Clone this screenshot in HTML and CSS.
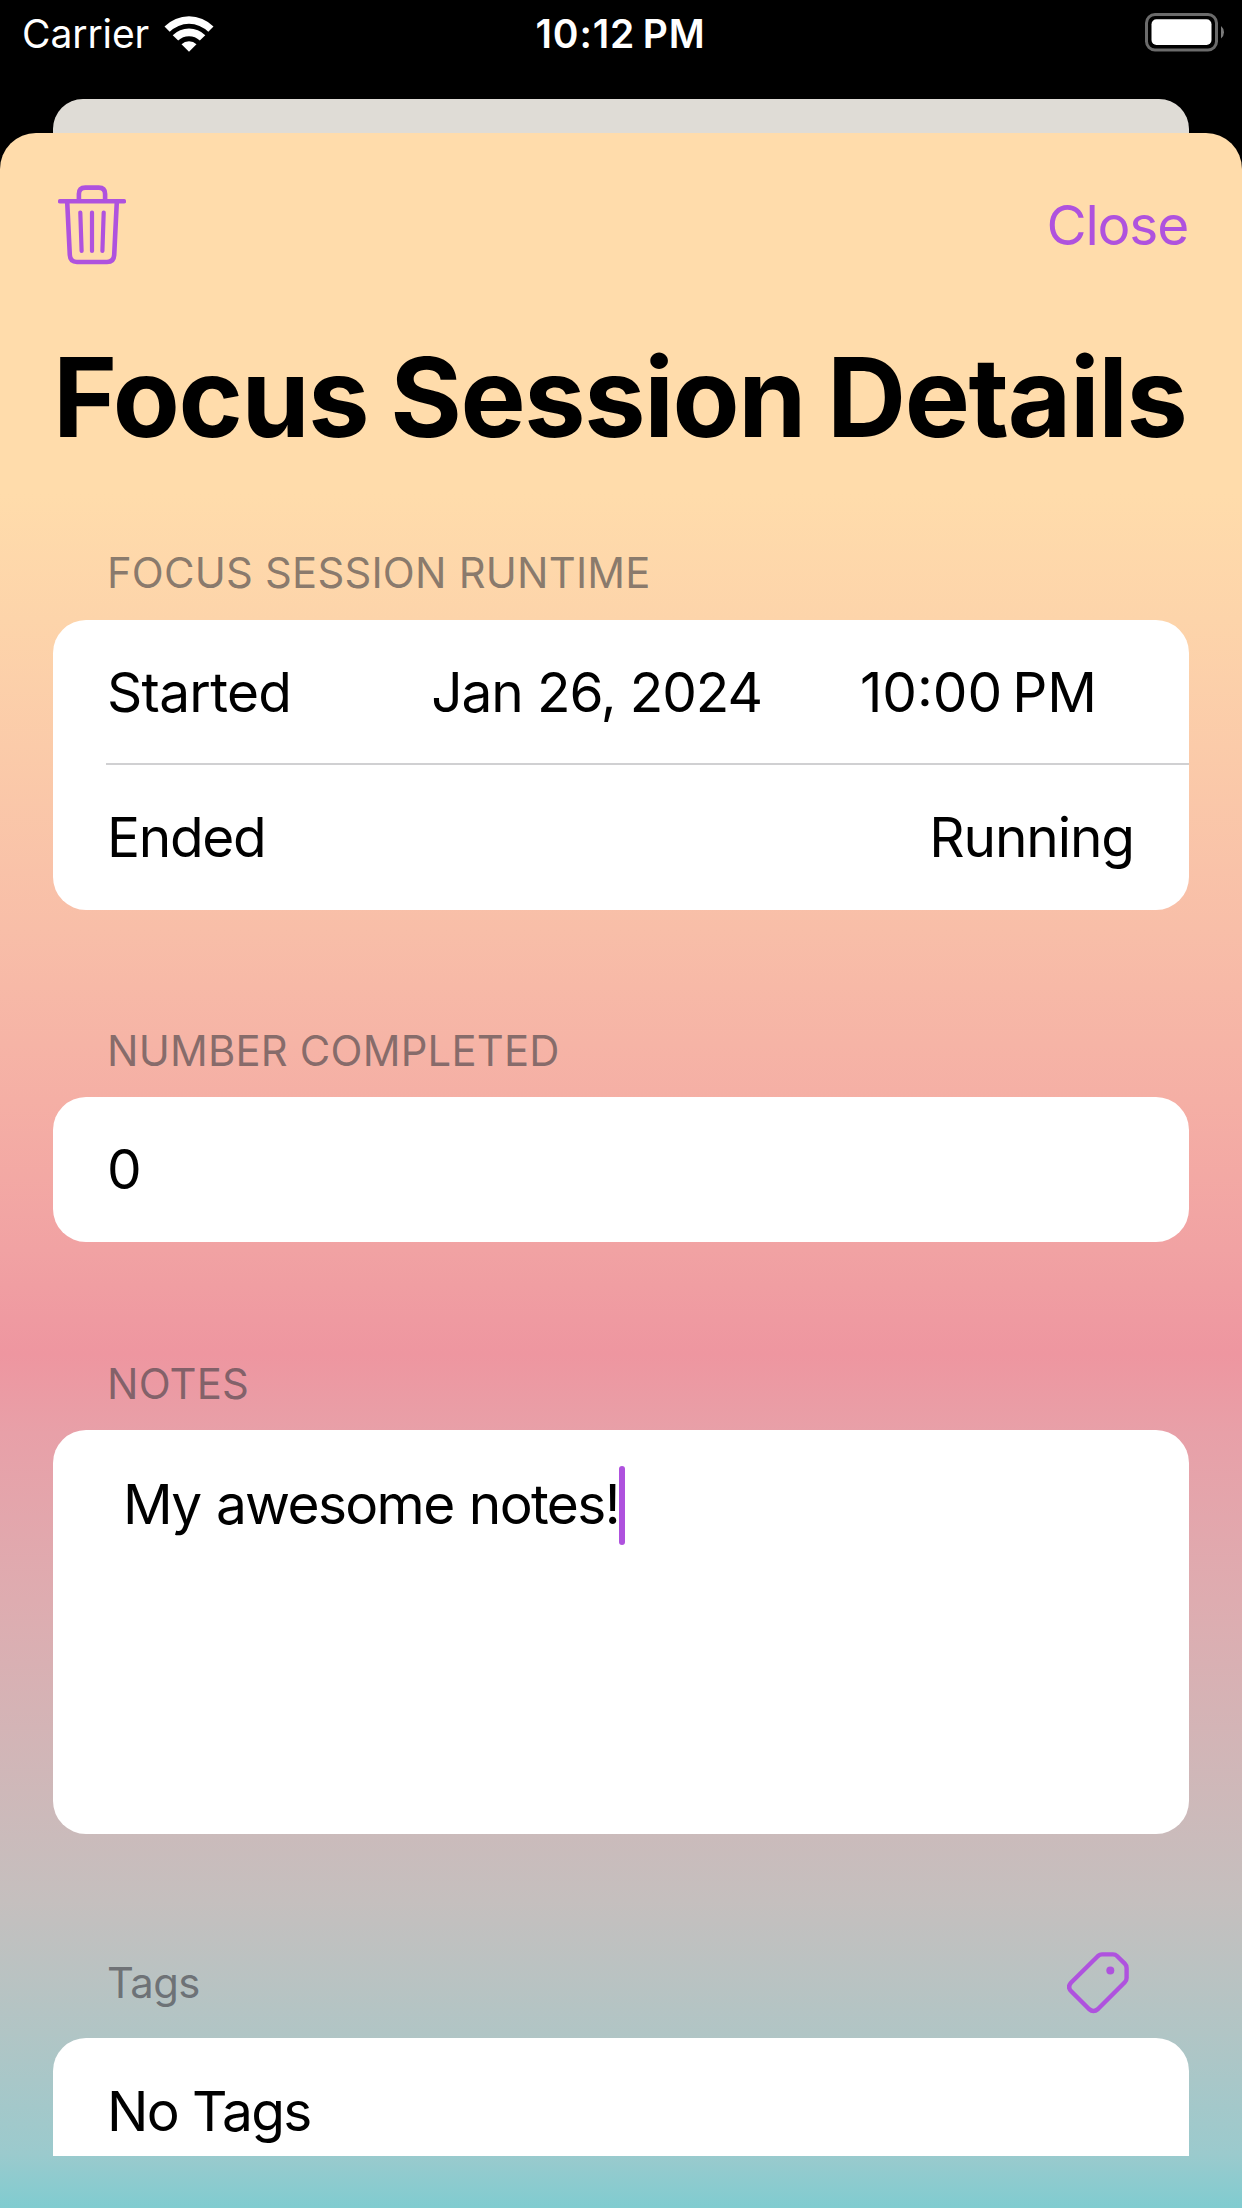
FILE: index.html
```html
<!DOCTYPE html>
<html lang="en">
<head>
    <meta charset="utf-8">
    <title>Focus Session Details</title>
    <link rel="stylesheet" href="styles.css">
</head>
<body>
    <div class="status-bar">
        <div class="carrier">
            <span class="carrier-name">Carrier</span>
            <svg class="wifi" width="50" height="38" viewBox="0 0 50 38">
                <path d="M0.5 11.5 A34.5 34.5 0 0 1 49.5 11.5 L44.3 16.8 A27.3 27.3 0 0 0 5.7 16.8 Z" fill="#fff"/>
                <path d="M8.7 20.3 A23 23 0 0 1 41.3 20.3 L35.8 25.6 A15.4 15.4 0 0 0 14.2 25.6 Z" fill="#fff"/>
                <path d="M17.5 29.2 A10.8 10.8 0 0 1 32.5 29.2 L25 36.8 Z" fill="#fff"/>
            </svg>
        </div>
        <span class="clock">10:12&#8201;PM</span>
        <svg class="battery" width="80" height="40" viewBox="0 0 80 40">
            <rect x="1.5" y="1.5" width="70" height="35.5" rx="8.5" fill="none" stroke="#6b6b6b" stroke-width="3"/>
            <rect x="6.5" y="6.3" width="60" height="25.6" rx="5" fill="#fff"/>
            <path d="M76 13 Q79 15.5 79 19.3 T76 25.6 Z" fill="#7a7a7a"/>
        </svg>
    </div>

    <div class="back-sheet"></div>

    <main class="sheet">
        <div class="toolbar">
            <svg class="trash" width="68" height="80" viewBox="0 0 68 80">
                <g fill="none" stroke="#af52de" stroke-linecap="round" stroke-linejoin="round">
                    <path d="M2 16.3 H66" stroke-width="4.4"/>
                    <path d="M20.9 15 V9 Q20.9 2.6 27.3 2.6 H40.7 Q47.1 2.6 47.1 9 V15" stroke-width="4.6"/>
                    <path d="M9.2 17 L11.8 70 Q12.2 77 19 77 H49 Q55.8 77 56.2 70 L58.8 17" stroke-width="4.6"/>
                    <path d="M22.3 27.5 L23.6 66 M34 27.5 V66 M45.7 27.5 L44.4 66" stroke-width="4.2"/>
                </g>
            </svg>
            <span class="close">Close</span>
        </div>

        <h1>Focus Session Details</h1>

        <h2 class="label-runtime">FOCUS SESSION RUNTIME</h2>
        <div class="card">
            <div class="row">
                <span class="started">Started</span>
                <div class="date-time">
                    <span class="date">Jan 26, 2024</span>
                    <span class="time">10:00&#8201;PM</span>
                </div>
            </div>
            <div class="divider"></div>
            <div class="row">
                <span class="ended">Ended</span>
                <span class="running">Running</span>
            </div>
        </div>

        <h2 class="label-number">NUMBER COMPLETED</h2>
        <div class="card">
            <div class="row"><span class="number">0</span></div>
        </div>

        <h2 class="label-notes">NOTES</h2>
        <div class="card notes">
            <span class="notes-text">My awesome notes!</span>
            <span class="caret"></span>
        </div>

        <div class="tags-header">
            <h2 class="label-tags">Tags</h2>
            <svg class="tag" width="62" height="62" viewBox="0 0 62 62">
                <path d="M35 2.4 H46 Q48.4 2.4 50 4 L57.8 11.6 Q59.6 13.4 59.6 16 V26 Q59.6 28.4 57.8 30.2 L31 57 Q26.5 61 22 57 L4.2 39.2 Q0 35 4.2 30.5 L31 4 Q32.8 2.4 35 2.4 Z" fill="none" stroke="#af52de" stroke-width="4.4" stroke-linejoin="round"/>
                <circle cx="43.3" cy="18.4" r="4" fill="#af52de"/>
            </svg>
        </div>
        <div class="card tags">
            <div class="row"><span class="no-tags">No Tags</span></div>
        </div>
    </main>
</body>
</html>
```
FILE: styles.css
```css
* {
    box-sizing: border-box;
}
body {
    margin: 0;
    width: 1242px;
    height: 2208px;
    overflow: hidden;
    background-color: #000;
    color: #000;
    font-family: Inter, "Liberation Sans", sans-serif;
    font-size: 55px;
    white-space: nowrap;
}
h1, h2 {
    margin: 0;
}
.status-bar {
    display: grid;
    grid-template-columns: 1fr auto 1fr;
    height: 99px;
    padding: 0 17px 0 22px;
    color: #fff;
    font-size: 39px;
    line-height: 68px;
}
.carrier {
    display: flex;
    gap: 15px;
}
.carrier-name {
    letter-spacing: -0.1px;
}
.wifi {
    margin-top: 15px;
}
.clock {
    font-weight: 600;
    letter-spacing: 0.9px;
    margin-right: 6px;
}
.battery {
    justify-self: end;
    margin-top: 13px;
}
.back-sheet {
    height: 34px;
    margin: 0 53px;
    border-radius: 30px 30px 0 0;
    background-color: #dfdcd6;
}
.sheet {
    height: 2075px;
    padding: 0 53px;
    border-radius: 36px 36px 0 0;
    background: linear-gradient(#ffdcab 0, #ffdcab 360px, #fdd4aa 487px, #f8bea8 797px, #f5afa5 967px, #f1a2a3 1117px, #ee96a0 1221px, #e8a0a8 1300px, #deacb0 1467px, #c5bfbe 1767px, #b1c5c5 1900px, #9bcacd 2020px, #80ccd0 2075px);
}
.toolbar {
    display: flex;
    justify-content: space-between;
    height: 184px;
    padding: 52px 1px 0 5px;
}
.close {
    color: #af52de;
    letter-spacing: -1.2px;
    line-height: 81px;
}
h1 {
    height: 160px;
    font-size: 109.5px;
    letter-spacing: -1.4px;
    line-height: 161px;
    word-spacing: -2.5px;
}
h2 {
    padding-left: 54px;
    color: rgba(60, 60, 67, 0.6);
    font-size: 41.8px;
    font-weight: 400;
    letter-spacing: 0.2px;
    line-height: 50px;
}
.label-runtime {
    margin: 71px 0 22px;
}
.label-number {
    margin: 116px 0 21px;
}
.label-notes {
    margin: 117px 0 21px;
}
.label-tags {
    letter-spacing: -0.6px;
}
.card {
    border-radius: 33px;
    background-color: #fff;
}
.row {
    display: flex;
    justify-content: space-between;
    height: 145px;
    padding: 0 55px 0 54px;
    line-height: 145px;
}
.divider {
    height: 2px;
    margin: -2px 0 0 53px;
    background-color: #d0d0d2;
}
.started {
    letter-spacing: -0.7px;
}
.ended {
    letter-spacing: -1.3px;
}
.running {
    letter-spacing: -1.1px;
}
.number {
    letter-spacing: -1px;
}
.date-time {
    display: flex;
    gap: 98px;
    padding-right: 37px;
}
.date {
    letter-spacing: -1.1px;
}
.notes {
    display: flex;
    height: 404px;
    padding: 36px 0 0 70px;
    line-height: 77px;
}
.notes-text {
    letter-spacing: -1.65px;
    word-spacing: 1.5px;
}
.caret {
    width: 6px;
    height: 79px;
    border-radius: 3px;
    background-color: #af52de;
}
.tags-header {
    display: flex;
    justify-content: space-between;
    align-items: center;
    height: 204px;
    padding: 93px 60px 0 0;
}
.no-tags {
    letter-spacing: -1.6px;
    line-height: 147px;
}
.tags {
    height: 118px;
    border-radius: 33px 33px 0 0;
}
```
